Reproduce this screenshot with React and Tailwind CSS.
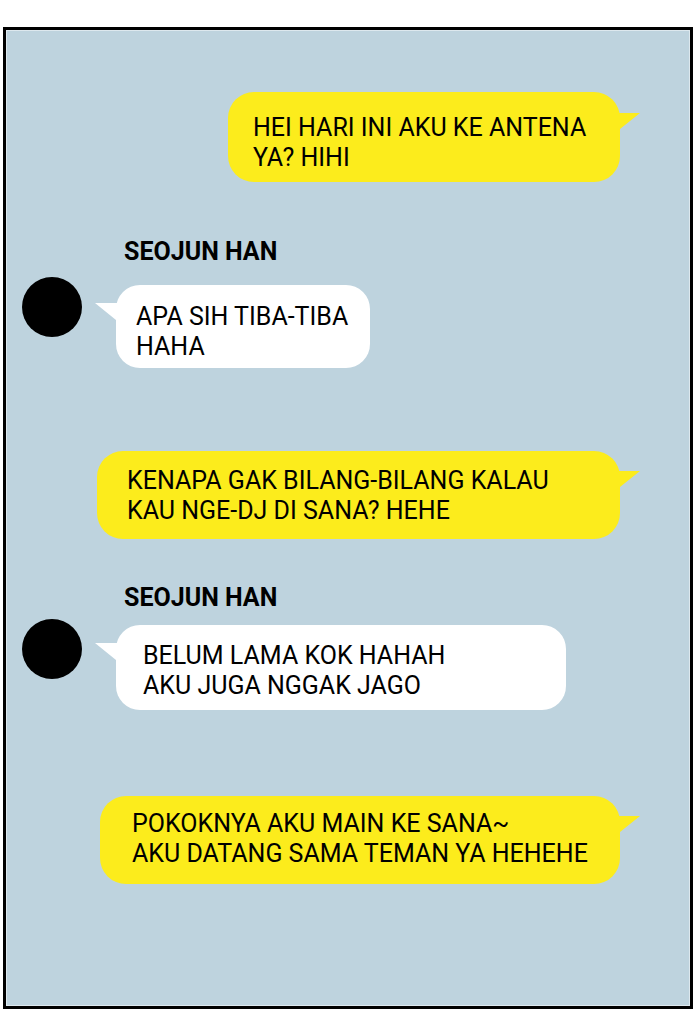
import React from "react";

function TailRight({ color, top }) {
  return (
    <svg className="absolute left-[calc(100%-6px)]" style={{ top }} width="26" height="20" viewBox="0 0 26 20">
      <polygon points="0,0 26,0 6,16 0,20" fill={color} />
    </svg>
  );
}

function TailLeft({ top }) {
  return (
    <svg className="absolute right-[calc(100%-6px)]" style={{ top }} width="27" height="20" viewBox="0 0 27 20">
      <polygon points="0,0 27,0 27,20 21,17" fill="#ffffff" />
    </svg>
  );
}

export default function App() {
  return (
    <div className="w-[700px] h-[1033px] bg-white pt-[27px] pl-[3px] font-['Roboto',sans-serif] text-black">
      <div className="w-[690px] h-[982px] border-[3px] border-black bg-[#bed3de] shadow-[inset_0_0_0_1px_#dde8ee] flex flex-col items-start">
        {/* me */}
        <div className="relative mt-[62px] ml-[222px] w-[392px] h-[90px] rounded-[26px] bg-[#fcec1c] pl-[25px] pt-[21px] text-[25px] leading-[30px]">
          HEI HARI INI AKU KE ANTENA<br />YA? HIHI
          <TailRight color="#fcec1c" top={21} />
        </div>

        <div className="mt-[56px] ml-[118px] text-[25px] leading-[28px] font-bold">SEOJUN HAN</div>
        <div className="mt-[11px] ml-[16px] flex items-start">
          <div className="w-[60px] h-[60px] rounded-full bg-black" />
          <div className="relative ml-[34px] mt-[8px] w-[254px] h-[83px] rounded-[24px] bg-white pl-[20px] pt-[17px] text-[25px] leading-[30px]">
            APA SIH TIBA-TIBA<br />HAHA
            <TailLeft top={18} />
          </div>
        </div>

        <div className="relative mt-[83px] ml-[91px] w-[523px] h-[88px] rounded-[26px] bg-[#fcec1c] pl-[30px] pt-[15px] text-[25px] leading-[30px]">
          KENAPA GAK BILANG-BILANG KALAU<br />KAU NGE-DJ DI SANA? HEHE
          <TailRight color="#fcec1c" top={20} />
        </div>

        <div className="mt-[45px] ml-[118px] text-[25px] leading-[28px] font-bold">SEOJUN HAN</div>
        <div className="mt-[7px] ml-[16px] flex items-start">
          <div className="w-[60px] h-[60px] rounded-full bg-black" />
          <div className="relative ml-[34px] mt-[6px] w-[450px] h-[85px] rounded-[24px] bg-white pl-[27px] pt-[16px] text-[25px] leading-[30px]">
            BELUM LAMA KOK HAHAH<br />AKU JUGA NGGAK JAGO
            <TailLeft top={18} />
          </div>
        </div>

        <div className="relative mt-[86px] ml-[94px] w-[520px] h-[88px] rounded-[26px] bg-[#fcec1c] pl-[32px] pt-[13px] text-[25px] leading-[30px]">
          POKOKNYA AKU MAIN KE SANA~<br />AKU DATANG SAMA TEMAN YA HEHEHE
          <TailRight color="#fcec1c" top={20} />
        </div>
      </div>
    </div>
  );
}
